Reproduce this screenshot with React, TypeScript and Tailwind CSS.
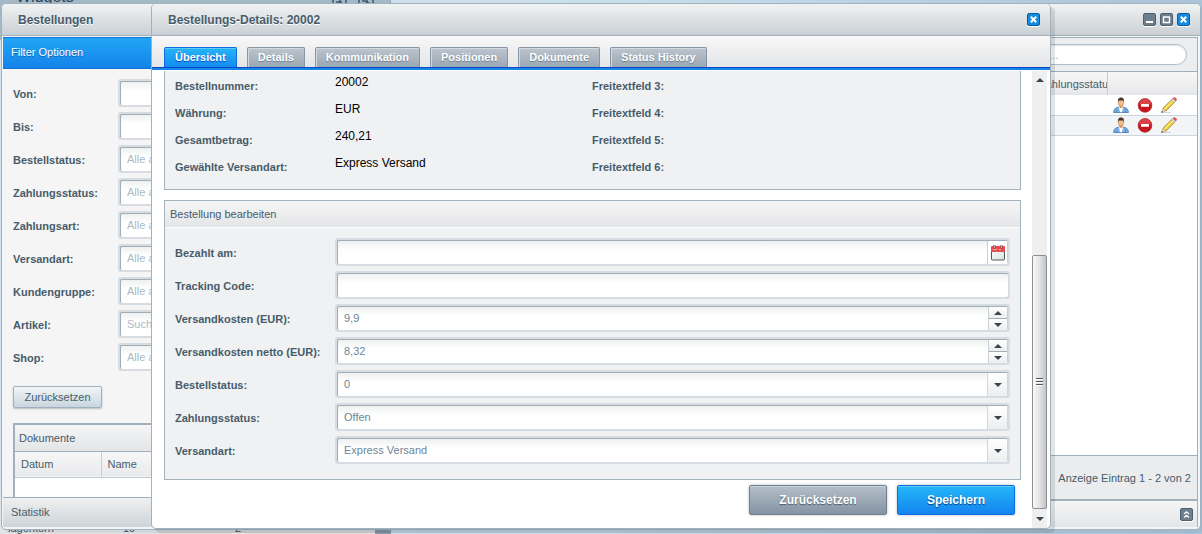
import { useState, ReactNode } from 'react';

interface FilterField {
  id: string;
  label: string;
  placeholder?: string;
}

const filterFields: FilterField[] = [
  { id: 'from', label: 'Von:' },
  { id: 'to', label: 'Bis:' },
  { id: 'orderState', label: 'Bestellstatus:', placeholder: 'Alle anzeigen' },
  { id: 'paymentState', label: 'Zahlungsstatus:', placeholder: 'Alle anzeigen' },
  { id: 'payment', label: 'Zahlungsart:', placeholder: 'Alle anzeigen' },
  { id: 'dispatch', label: 'Versandart:', placeholder: 'Alle anzeigen' },
  { id: 'group', label: 'Kundengruppe:', placeholder: 'Alle anzeigen' },
  { id: 'article', label: 'Artikel:', placeholder: 'Suchen...' },
  { id: 'shop', label: 'Shop:', placeholder: 'Alle anzeigen' },
];

const details = [
  { label: 'Bestellnummer:', value: '20002', extra: 'Freitextfeld 3:' },
  { label: 'Währung:', value: 'EUR', extra: 'Freitextfeld 4:' },
  { label: 'Gesamtbetrag:', value: '240,21', extra: 'Freitextfeld 5:' },
  { label: 'Gewählte Versandart:', value: 'Express Versand', extra: 'Freitextfeld 6:' },
];

const tabs = ['Übersicht', 'Details', 'Kommunikation', 'Positionen', 'Dokumente', 'Status History'];

const UserIcon = () => (
  <svg width="16" height="16" viewBox="0 0 16 16">
    <path d="M.6 15.5c0-3.2 1.6-4.6 4.6-5.2h5.6c3 .6 4.6 2 4.6 5.2z" fill="#7db2e2" stroke="#3e78b2" strokeWidth=".8" />
    <path d="M5.8 10h4.4L8.9 15.2H7.1z" fill="#fff" />
    <path d="M3.6 12.5v3M12.4 12.5v3" stroke="#3e78b2" strokeWidth=".7" />
    <path d="M6.3 8h3.4v2.2L8 11.6l-1.7-1.4z" fill="#dba06c" />
    <ellipse cx="8" cy="5.6" rx="2.7" ry="3.6" fill="#f0bd8c" stroke="#a87445" strokeWidth=".5" />
    <path d="M5 5.2C4.6 1.8 6 .5 8 .5s3.4 1.3 3 4.7c-.4-1.2-.7-1.7-1.2-2-1.2.4-2.4.4-3.6 0-.5.3-.8.8-1.2 2z" fill="#4b3327" />
  </svg>
);

const MinusIcon = () => (
  <svg width="16" height="16" viewBox="0 0 16 16">
    <circle cx="8" cy="8.4" r="6.8" fill="#c9161c" stroke="#a3262a" strokeWidth=".8" />
    <path d="M1.8 7.6a6.2 5.8 0 0 1 12.4 0z" fill="#e2565a" opacity=".7" />
    <rect x="4" y="7" width="8" height="2.8" rx=".4" fill="#fff" />
  </svg>
);

const PencilIcon = () => (
  <svg width="16" height="16" viewBox="0 0 16 16">
    <path d="M.5 15.5h9" stroke="#c9c9c9" strokeWidth=".8" />
    <path d="M2 11.3l9.3-9.2 2.7 2.7-9.2 9.3z" fill="#f2d640" stroke="#94781a" strokeWidth=".8" />
    <path d="M3.2 12.2l9.2-9.1" stroke="#fff3a6" strokeWidth="1" />
    <path d="M2 11.3L.4 15.6l4.4-1.5z" fill="#f3dcb4" stroke="#a58b62" strokeWidth=".5" />
    <path d="M1 14.1L.3 15.7l1.7-.6z" fill="#222" />
    <path d="M10.7 2.7l1.3-1.3 2.7 2.7-1.3 1.3z" fill="#dfe4ea" stroke="#8d99a6" strokeWidth=".4" />
    <path d="M12 1.4L13 .5c.9-.5 3.1 1.5 2.6 2.6l-.9 1z" fill="#ee4d58" stroke="#bd3d46" strokeWidth=".4" />
  </svg>
);

const CalendarIcon = () => (
  <svg width="16" height="17" viewBox="0 0 16 17">
    <defs>
      <linearGradient id="calPage" x1="0" y1="0" x2="1" y2="1">
        <stop offset="0" stopColor="#fff" />
        <stop offset="1" stopColor="#d5e3e2" />
      </linearGradient>
    </defs>
    <rect x="1.5" y="2.5" width="13" height="13.5" rx="1" fill="url(#calPage)" stroke="#555" />
    <path d="M1 7V3a1 1 0 0 1 1-1h12a1 1 0 0 1 1 1v4z" fill="#f04a4e" />
    <path d="M1 7.5h14" stroke="#d5595b" />
    <path d="M3 5.5h4M9 5.5h2" stroke="#f7a5a5" />
    <path d="M4.5 1v3.5M11.5 1v3.5" stroke="#6d4a4a" strokeWidth="2" />
    <path d="M4.5 1.3v2.5M11.5 1.3v2.5" stroke="#ddd" strokeWidth=".8" />
  </svg>
);

const Arrow = ({ up = false }: { up?: boolean }) => (
  <svg width="8" height="4" viewBox="0 0 8 4" className="block">
    <path d={up ? 'M0 4h8L4 0z' : 'M0 0h8L4 4z'} fill="#39464f" />
  </svg>
);

const ToolButton = ({ kind }: { kind: 'min' | 'max' | 'close' | 'expand' }) => (
  <button
    type="button"
    aria-label={kind}
    className={`block size-[13px] shrink-0 rounded-xs shadow-[0_1px_0_#fff] ${
      kind === 'close' ? 'border border-[#0b5c9e] bg-[#178be0]' : 'border border-[#4f5f6c] bg-[#6c7f8e]'
    }`}
  >
    <svg width="11" height="11" viewBox="0 0 11 11" fill="none" stroke="#fff">
      {kind === 'min' && <path d="M2 8h7" strokeWidth="2" />}
      {kind === 'max' && <path d="M2 3h7M2.5 3v6M8.5 3v6M2 8.5h7" strokeWidth="1.4" />}
      {kind === 'close' && <path d="M2.8 2.8l5.4 5.4M8.2 2.8L2.8 8.2" strokeWidth="2" />}
      {kind === 'expand' && <path d="M3 5l2.5-2.2L8 5M3 8.5l2.5-2.2L8 8.5" strokeWidth="1.2" />}
    </svg>
  </button>
);

const TitleBar = ({ title, children }: { title: string; children: ReactNode }) => (
  <header className="flex h-8 shrink-0 items-center justify-between rounded-t border-b border-[#a0afba] bg-linear-to-b from-[#f1f2f2] to-[#c9d0d5] pr-[10px] pl-4">
    <h2 className="text-xs font-bold [text-shadow:0_1px_0_#fff]">{title}</h2>
    <div className="flex gap-1">{children}</div>
  </header>
);

const FieldFrame = ({ children }: { children: ReactNode }) => (
  <div className="h-7 min-w-0 flex-1 rounded-[3px] bg-[#d6dce1] p-[2px]">
    <div className="relative flex h-6 overflow-hidden rounded-xs border-t border-l border-[#a1aeb8] bg-linear-to-b from-[#eff1f1] to-white to-40%">
      {children}
    </div>
  </div>
);

const inputClass =
  'h-[22px] min-w-0 flex-1 bg-transparent px-[6px] text-[11px] text-[#6c8596] outline-none placeholder:text-[#a9bac6]';

const FormRow = ({ id, label, children }: { id: string; label: string; children: ReactNode }) => (
  <div className="flex items-center">
    <label htmlFor={id} className="w-40 shrink-0 pt-[2px] text-[11px] font-bold whitespace-nowrap">
      {label}
    </label>
    <FieldFrame>{children}</FieldFrame>
  </div>
);

const SelectField = ({ id, options }: { id: string; options: string[] }) => (
  <>
    <select id={id} className={`${inputClass} appearance-none`}>
      {options.map((o) => (
        <option key={o}>{o}</option>
      ))}
    </select>
    <span className="pointer-events-none absolute inset-y-0 right-0 flex w-[21px] items-center justify-center border-x border-[#d0d7dd] bg-linear-to-b from-white to-[#eceef0]">
      <Arrow />
    </span>
  </>
);

const SpinnerField = ({ id, initial }: { id: string; initial: string }) => {
  const [value, setValue] = useState(initial);

  const step = (by: number) => {
    const next = parseFloat(value.replace(',', '.')) + by;
    if (!isNaN(next)) setValue(String(Math.round(next * 100) / 100).replace('.', ','));
  };

  return (
    <>
      <input id={id} className={inputClass} value={value} onChange={(e) => setValue(e.target.value)} />
      <div className="flex w-5 flex-col border-x border-[#c9d1d7]">
        <button type="button" aria-label="Erhöhen" onClick={() => step(1)} className="flex flex-1 items-center justify-center border-b border-[#a1aeb8] bg-linear-to-b from-white to-[#eceef0]">
          <Arrow up />
        </button>
        <button type="button" aria-label="Verringern" onClick={() => step(-1)} className="flex flex-1 items-center justify-center bg-linear-to-b from-white to-[#eceef0]">
          <Arrow />
        </button>
      </div>
    </>
  );
};

const Desktop = () => (
  <div className="flex h-full flex-col justify-between">
    <div className="flex h-10 w-[391px] justify-between overflow-hidden border-r border-[#8fa5b5] bg-[#a5b8c6] px-4 text-[#2b4a5e]">
      <p className="-mt-[13px] text-base leading-5">Widgets</p>
      <svg width="42" height="4" viewBox="0 0 42 4" fill="none" stroke="#3d5a6c" strokeWidth="1.5">
        <path d="M1 0v4M4 2h6M8 0v4M14 0v4M27 0v4M30 1h6M34 2l5 2M41 0v4" />
      </svg>
    </div>
    <div className="flex h-10 w-[391px] items-end overflow-hidden border-r-[16px] border-[#8c9dab] bg-[#e2e3e4] pl-2 text-[11px] leading-3 text-[#3f5361]">
      <span className="w-[115px]">lagerkorn</span>
      <span className="w-28">10</span>
      <span>2</span>
    </div>
  </div>
);

const Sidebar = () => (
  <aside className="flex w-60 shrink-0 flex-col">
    <h3 className="flex h-8 shrink-0 items-center border-y border-[#0f74d4] bg-linear-to-b from-[#22a6f5] to-[#1583ea] pb-[2px] pl-2 text-[11px] text-white [text-shadow:0_1px_0_#0d63b8]">
      Filter Optionen
    </h3>
    <form className="flex min-h-0 flex-1 flex-col overflow-hidden bg-[#f5f5f5] px-[10px] pt-[10px]">
      <div className="flex flex-col gap-[5px]">
        {filterFields.map((f) => (
          <div key={f.id} className="flex items-center">
            <label htmlFor={f.id} className="w-[105px] shrink-0 pt-[2px] text-[11px] font-bold">
              {f.label}
            </label>
            <FieldFrame>
              <input id={f.id} placeholder={f.placeholder} className={inputClass} />
            </FieldFrame>
          </div>
        ))}
      </div>
      <button type="reset" className="mt-[15px] h-[22px] w-[89px] shrink-0 rounded-xs border border-[#9fb0bf] bg-linear-to-b from-[#f2f5f7] to-[#c9d6df] text-[11px] shadow-[0_1px_2px_#b5bec6]">
        Zurücksetzen
      </button>
      <section className="mt-[15px] flex-1 border-t-2 border-l-2 border-[#a1b0be] bg-white">
        <h4 className="flex h-[27px] items-center border-b border-[#a1b0be] bg-linear-to-b from-[#f5f5f6] to-[#e3e5e7] pl-1 text-[11px]">
          Dokumente
        </h4>
        <table className="w-full text-left text-[11px]">
          <thead>
            <tr className="h-[25px] border-b border-[#c0c7cd] bg-linear-to-b from-[#f7f7f7] to-[#e9eaec]">
              <th className="w-[86px] border-r border-[#c9cdd1] pl-[6px] font-normal">Datum</th>
              <th className="pl-[6px] font-normal">Name</th>
            </tr>
          </thead>
        </table>
      </section>
    </form>
    <h3 className="flex h-[30px] shrink-0 items-center border-t border-[#a1b0be] bg-linear-to-b from-[#eff0f0] to-[#ced4d9] pl-2 text-[11px]">
      Statistik
    </h3>
  </aside>
);

const OrderGrid = () => (
  <section className="flex min-w-0 flex-1 flex-col border-t border-r border-[#a0afba]">
    <div className="flex h-[34px] shrink-0 items-center justify-end border-b border-[#a0afba] bg-[#ebedef] pr-[10px]">
      <input
        type="search"
        aria-label="Suche"
        placeholder="Suche..."
        className="h-[21px] w-[180px] rounded-full border border-[#b0bfca] bg-white px-[10px] text-[11px] shadow-[inset_0_1px_2px_#dde3e8] outline-none placeholder:text-[#9aa9b4]"
      />
    </div>
    <div className="flex-1 bg-white">
      <table className="w-full table-fixed text-left text-[11px]">
        <thead>
          <tr className="h-[23px] bg-linear-to-b from-[#f7f7f7] to-[#e6e7e9]">
            <th className="font-normal" />
            <th className="w-[74px] overflow-hidden border-r border-[#c9cdd1] pt-[2px] pl-[6px] font-normal whitespace-nowrap">
              Zahlungsstatus
            </th>
            <th className="w-[90px]" />
          </tr>
        </thead>
        <tbody>
          {[1, 2].map((row) => (
            <tr key={row} className="h-5 border-b border-[#cbd5dd] even:bg-[#f2f4f6]">
              <td />
              <td />
              <td>
                <div className="flex gap-2 pl-[6px]">
                  <button type="button" aria-label="Kunde">
                    <UserIcon />
                  </button>
                  <button type="button" aria-label="Löschen">
                    <MinusIcon />
                  </button>
                  <button type="button" aria-label="Bearbeiten">
                    <PencilIcon />
                  </button>
                </div>
              </td>
            </tr>
          ))}
        </tbody>
      </table>
    </div>
    <footer className="flex h-11 shrink-0 items-center justify-end border-t border-[#a0afba] bg-[#ebecee] pt-px pr-[6px] text-[11px]">
      Anzeige Eintrag 1 - 2 von 2
    </footer>
    <div className="flex h-7 shrink-0 items-center justify-end border-t-2 border-[#a0afba] bg-linear-to-b from-[#f6f6f6] to-[#e3e5e7] pr-1">
      <ToolButton kind="expand" />
    </div>
  </section>
);

const ScrollBar = () => (
  <div className="mr-[3px] flex w-[15px] shrink-0 flex-col bg-[#efefef]">
    <div className="flex h-[17px] items-center justify-center">
      <Arrow up />
    </div>
    <div className="flex-1" />
    <div className="flex h-[254px] flex-col items-center justify-center gap-px rounded-xs border border-[#8f8f8f] bg-linear-to-r from-[#f8f8f8] via-[#e3e4e6] to-[#c3c4c8]">
      {[1, 2, 3].map((n) => (
        <span key={n} className="h-[2px] w-[7px] border-b border-white bg-[#555]" />
      ))}
    </div>
    <div className="flex h-[19px] items-center justify-center">
      <Arrow />
    </div>
  </div>
);

const OrderDetails = () => {
  const [activeTab, setActiveTab] = useState(tabs[0]);

  return (
    <div
      role="dialog"
      aria-label="Bestellungs-Details"
      className="absolute top-[3px] right-[151px] bottom-[5px] left-[151px] flex flex-col rounded-[5px] border border-[#a0b1bf] bg-white shadow-[4px_4px_0_#0000001a]"
    >
      <TitleBar title="Bestellungs-Details: 20002">
        <ToolButton kind="close" />
      </TitleBar>
      <nav className="flex h-[31px] shrink-0 items-end gap-[10px] bg-linear-to-b from-[#f8f8f8] to-[#e4e5e7] pl-3">
        {tabs.map((tab) => (
          <button
            key={tab}
            type="button"
            onClick={() => setActiveTab(tab)}
            className={`h-5 rounded-t-xs border border-b-0 px-[10px] text-[11px] font-bold whitespace-nowrap text-white ${
              tab === activeTab
                ? 'border-[#0f6be0] bg-linear-to-b from-[#26b4f6] to-[#158cf0] shadow-[inset_0_1px_0_#5ccbfa] [text-shadow:0_1px_1px_#0348c8]'
                : 'border-[#8795a4] bg-linear-to-b from-[#bdc5ce] to-[#9aa7b4] shadow-[inset_1px_1px_0_#d4dae0] [text-shadow:0_1px_1px_#6e7b88]'
            }`}
          >
            {tab}
          </button>
        ))}
      </nav>
      <div className="h-[3px] shrink-0 border-t border-[#0a47c4] bg-[#1784ea]" />
      <div className="flex min-h-0 flex-1 pt-px">
        <div className="min-w-0 flex-1 overflow-hidden pr-[11px] pl-3">
          <section className="border-x border-b border-[#a3b4bf] bg-[#f0f1f3] px-[10px] pt-px pb-[9px]">
            {details.map((d) => (
              <dl key={d.label} className="flex h-[27px]">
                <dt className="w-40 text-[11px] leading-[29px] font-bold">{d.label}</dt>
                <dd className="flex-1 text-xs leading-5 text-black">{d.value}</dd>
                <dt className="w-[418px] text-[11px] leading-[29px] font-bold">{d.extra}</dt>
              </dl>
            ))}
          </section>
          <section className="mt-[10px] border border-[#a3b4bf] bg-[#f0f1f3]">
            <h3 className="flex h-[27px] items-center border-b border-white bg-linear-to-b from-[#f6f6f6] to-[#e4e5e7] pl-[5px] text-[11px]">
              Bestellung bearbeiten
            </h3>
            <form className="flex flex-col gap-[5px] pt-[10px] pr-[10px] pb-[15px] pl-[10px]">
              <FormRow id="paidAt" label="Bezahlt am:">
                <input id="paidAt" className={inputClass} />
                <button type="button" aria-label="Datum wählen" className="flex w-[21px] items-center justify-center border-x border-[#c9d1d7] bg-white">
                  <CalendarIcon />
                </button>
              </FormRow>
              <FormRow id="tracking" label="Tracking Code:">
                <input id="tracking" className={inputClass} />
              </FormRow>
              <FormRow id="shipping" label="Versandkosten (EUR):">
                <SpinnerField id="shipping" initial="9,9" />
              </FormRow>
              <FormRow id="shippingNet" label="Versandkosten netto (EUR):">
                <SpinnerField id="shippingNet" initial="8,32" />
              </FormRow>
              <FormRow id="state" label="Bestellstatus:">
                <SelectField id="state" options={['0', '1', '2']} />
              </FormRow>
              <FormRow id="paid" label="Zahlungsstatus:">
                <SelectField id="paid" options={['Offen', 'Bezahlt']} />
              </FormRow>
              <FormRow id="dispatchType" label="Versandart:">
                <SelectField id="dispatchType" options={['Express Versand', 'Standard Versand']} />
              </FormRow>
            </form>
          </section>
          <div className="mt-[5px] flex justify-end gap-[10px] pr-[6px]">
            <button type="button" className="h-[30px] w-[138px] rounded-xs border border-[#6f7e90] bg-linear-to-b from-[#b3bfc9] to-[#8593a3] text-xs font-bold text-white shadow-[inset_0_1px_0_#cdd5dc,0_0_3px_#bbb] [text-shadow:0_1px_1px_#4b5a69]">
              Zurücksetzen
            </button>
            <button type="button" className="h-[30px] w-[118px] rounded-xs border border-[#0f6be0] bg-linear-to-b from-[#26b6f7] to-[#1684f0] text-xs font-bold text-white shadow-[inset_0_1px_0_#5ccbfa,0_0_3px_#bbb] [text-shadow:0_1px_1px_#0a3d7c]">
              Speichern
            </button>
          </div>
        </div>
        <ScrollBar />
      </div>
    </div>
  );
};

const App = () => {
  return (
    <div className="relative h-screen overflow-hidden bg-linear-to-r from-[#d3e2ee] via-[#cbdeec] to-[#a9c3d8] font-['Liberation_Sans',Arial,sans-serif] text-[#475c6a]">
      <Desktop />
      <main className="absolute top-[3px] right-px bottom-[4px] left-px flex flex-col rounded-[5px] border border-[#a0b1bf] bg-[#f4f5f6] shadow-[3px_3px_0_#0000000d]">
        <TitleBar title="Bestellungen">
          <ToolButton kind="min" />
          <ToolButton kind="max" />
          <ToolButton kind="close" />
        </TitleBar>
        <div className="flex min-h-0 flex-1 gap-[5px] pt-px pr-[2px] pb-[2px] pl-px">
          <Sidebar />
          <OrderGrid />
        </div>
      </main>
      <OrderDetails />
    </div>
  );
};

export default App;
